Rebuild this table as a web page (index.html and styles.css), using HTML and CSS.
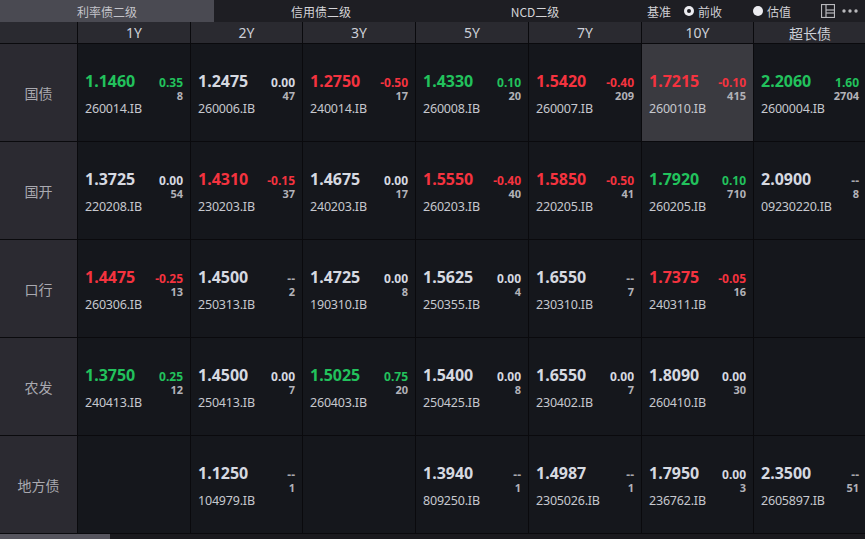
FILE: index.html
```html
<!DOCTYPE html>
<html lang="zh">
<head>
<meta charset="utf-8">
<title>利率债二级</title>
<link rel="stylesheet" href="styles.css">
</head>
<body>
<div class="app">
  <div class="topbar">
    <div class="tab active">利率债二级</div>
    <div class="tab">信用债二级</div>
    <div class="tab">NCD二级</div>
    <div class="controls">
      <span class="lbl">基准</span>
      <span class="radio checked"></span><span class="opt">前收</span>
      <span class="radio"></span><span class="opt">估值</span>
      <svg class="icon-layout" width="14" height="14" viewBox="0 0 14 14"><rect x="0.5" y="0.5" width="13" height="13" fill="none" stroke="#b8b8bc" stroke-width="1.2"/><line x1="5" y1="0.5" x2="5" y2="13.5" stroke="#b8b8bc" stroke-width="1.2"/><line x1="5" y1="6" x2="13.5" y2="6" stroke="#b8b8bc" stroke-width="1.2"/><line x1="5" y1="9" x2="13.5" y2="9" stroke="#b8b8bc" stroke-width="1.2"/></svg>
      <svg class="icon-more" width="16" height="4" viewBox="0 0 16 4"><circle cx="2" cy="2" r="1.7" fill="#b8b8bc"/><circle cx="8" cy="2" r="1.7" fill="#b8b8bc"/><circle cx="14" cy="2" r="1.7" fill="#b8b8bc"/></svg>
    </div>
  </div>

  <div class="table">
    <div class="hd corner"></div>
    <div class="hd">1Y</div>
    <div class="hd">2Y</div>
    <div class="hd">3Y</div>
    <div class="hd">5Y</div>
    <div class="hd">7Y</div>
    <div class="hd">10Y</div>
    <div class="hd">超长债</div>

    <!-- 国债 -->
    <div class="rl">国债</div>
    <div class="cell"><div class="l1"><span class="px g">1.1460</span><span class="ch g">0.35</span></div><div class="vol">8</div><div class="code">260014.IB</div></div>
    <div class="cell"><div class="l1"><span class="px w">1.2475</span><span class="ch w">0.00</span></div><div class="vol">47</div><div class="code">260006.IB</div></div>
    <div class="cell"><div class="l1"><span class="px r">1.2750</span><span class="ch r">-0.50</span></div><div class="vol">17</div><div class="code">240014.IB</div></div>
    <div class="cell"><div class="l1"><span class="px g">1.4330</span><span class="ch g">0.10</span></div><div class="vol">20</div><div class="code">260008.IB</div></div>
    <div class="cell"><div class="l1"><span class="px r">1.5420</span><span class="ch r">-0.40</span></div><div class="vol">209</div><div class="code">260007.IB</div></div>
    <div class="cell sel"><div class="l1"><span class="px r">1.7215</span><span class="ch r">-0.10</span></div><div class="vol">415</div><div class="code">260010.IB</div></div>
    <div class="cell"><div class="l1"><span class="px g">2.2060</span><span class="ch g">1.60</span></div><div class="vol">2704</div><div class="code">2600004.IB</div></div>

    <!-- 国开 -->
    <div class="rl">国开</div>
    <div class="cell"><div class="l1"><span class="px w">1.3725</span><span class="ch w">0.00</span></div><div class="vol">54</div><div class="code">220208.IB</div></div>
    <div class="cell"><div class="l1"><span class="px r">1.4310</span><span class="ch r">-0.15</span></div><div class="vol">37</div><div class="code">230203.IB</div></div>
    <div class="cell"><div class="l1"><span class="px w">1.4675</span><span class="ch w">0.00</span></div><div class="vol">17</div><div class="code">240203.IB</div></div>
    <div class="cell"><div class="l1"><span class="px r">1.5550</span><span class="ch r">-0.40</span></div><div class="vol">40</div><div class="code">260203.IB</div></div>
    <div class="cell"><div class="l1"><span class="px r">1.5850</span><span class="ch r">-0.50</span></div><div class="vol">41</div><div class="code">220205.IB</div></div>
    <div class="cell"><div class="l1"><span class="px g">1.7920</span><span class="ch g">0.10</span></div><div class="vol">710</div><div class="code">260205.IB</div></div>
    <div class="cell"><div class="l1"><span class="px w">2.0900</span><span class="ch d">--</span></div><div class="vol">8</div><div class="code">09230220.IB</div></div>

    <!-- 口行 -->
    <div class="rl">口行</div>
    <div class="cell"><div class="l1"><span class="px r">1.4475</span><span class="ch r">-0.25</span></div><div class="vol">13</div><div class="code">260306.IB</div></div>
    <div class="cell"><div class="l1"><span class="px w">1.4500</span><span class="ch d">--</span></div><div class="vol">2</div><div class="code">250313.IB</div></div>
    <div class="cell"><div class="l1"><span class="px w">1.4725</span><span class="ch w">0.00</span></div><div class="vol">8</div><div class="code">190310.IB</div></div>
    <div class="cell"><div class="l1"><span class="px w">1.5625</span><span class="ch w">0.00</span></div><div class="vol">4</div><div class="code">250355.IB</div></div>
    <div class="cell"><div class="l1"><span class="px w">1.6550</span><span class="ch d">--</span></div><div class="vol">7</div><div class="code">230310.IB</div></div>
    <div class="cell"><div class="l1"><span class="px r">1.7375</span><span class="ch r">-0.05</span></div><div class="vol">16</div><div class="code">240311.IB</div></div>
    <div class="cell"></div>

    <!-- 农发 -->
    <div class="rl">农发</div>
    <div class="cell"><div class="l1"><span class="px g">1.3750</span><span class="ch g">0.25</span></div><div class="vol">12</div><div class="code">240413.IB</div></div>
    <div class="cell"><div class="l1"><span class="px w">1.4500</span><span class="ch w">0.00</span></div><div class="vol">7</div><div class="code">250413.IB</div></div>
    <div class="cell"><div class="l1"><span class="px g">1.5025</span><span class="ch g">0.75</span></div><div class="vol">20</div><div class="code">260403.IB</div></div>
    <div class="cell"><div class="l1"><span class="px w">1.5400</span><span class="ch w">0.00</span></div><div class="vol">8</div><div class="code">250425.IB</div></div>
    <div class="cell"><div class="l1"><span class="px w">1.6550</span><span class="ch w">0.00</span></div><div class="vol">7</div><div class="code">230402.IB</div></div>
    <div class="cell"><div class="l1"><span class="px w">1.8090</span><span class="ch w">0.00</span></div><div class="vol">30</div><div class="code">260410.IB</div></div>
    <div class="cell"></div>

    <!-- 地方债 -->
    <div class="rl">地方债</div>
    <div class="cell"></div>
    <div class="cell"><div class="l1"><span class="px w">1.1250</span><span class="ch d">--</span></div><div class="vol">1</div><div class="code">104979.IB</div></div>
    <div class="cell"></div>
    <div class="cell"><div class="l1"><span class="px w">1.3940</span><span class="ch d">--</span></div><div class="vol">1</div><div class="code">809250.IB</div></div>
    <div class="cell"><div class="l1"><span class="px w">1.4987</span><span class="ch d">--</span></div><div class="vol">1</div><div class="code">2305026.IB</div></div>
    <div class="cell"><div class="l1"><span class="px w">1.7950</span><span class="ch w">0.00</span></div><div class="vol">3</div><div class="code">236762.IB</div></div>
    <div class="cell"><div class="l1"><span class="px w">2.3500</span><span class="ch d">--</span></div><div class="vol">51</div><div class="code">2605897.IB</div></div>
  </div>

  <div class="scrollbar"><div class="thumb"></div></div>
</div>
</body>
</html>
```

FILE: styles.css
```css
* { box-sizing: border-box; }
html, body {
  margin: 0;
  padding: 0;
  background: #0c0c0f;
}
body {
  font-family: "Noto Sans", "Noto Sans CJK SC", sans-serif;
  color: #d0d0d6;
  width: 865px;
  height: 539px;
  overflow: hidden;
}
.app {
  display: flex;
  flex-direction: column;
  width: 865px;
  height: 539px;
}
.topbar {
  display: flex;
  align-items: stretch;
  height: 22px;
  background: #1e1e23;
  font-family: "Noto Sans CJK SC", sans-serif;
  font-size: 12px;
}
.tab {
  width: 214px;
  display: flex;
  align-items: center;
  justify-content: center;
  color: #d4d4d8;
}
.tab.active {
  background: #4a4a52;
  color: #c4c4ca;
}
.controls {
  flex: 1;
  display: flex;
  align-items: center;
  padding-left: 5px;
  color: #cfcfd4;
}
.lbl { margin-right: 13px; }
.radio {
  width: 10px;
  height: 10px;
  border-radius: 50%;
  background: #ececf0;
  margin-right: 4px;
  position: relative;
}
.radio.checked::after {
  content: "";
  position: absolute;
  left: 3px;
  top: 3px;
  width: 4px;
  height: 4px;
  border-radius: 50%;
  background: #1e1e23;
}
.opt { margin-right: 31px; }
.opt:last-of-type { margin-right: 30px; }
.icon-layout { margin-right: 7px; }

.table {
  display: grid;
  grid-template-columns: 77px 112px 111px 112px 112px 112px 111px 112px;
  grid-template-rows: 21px repeat(5, 97px);
  gap: 1px;
  background: #0a0a0d;
  padding-bottom: 1px;
}
.hd {
  background: #2a2a30;
  display: flex;
  align-items: center;
  justify-content: center;
  font-family: "Noto Sans", "Noto Sans CJK SC", sans-serif;
  font-size: 14px;
  color: #cdd0d8;
}
.rl {
  background: #2b2a31;
  display: flex;
  align-items: center;
  justify-content: center;
  font-family: "Noto Sans CJK SC", sans-serif;
  font-size: 14px;
  color: #a9a9b0;
}
.cell {
  background: #15171c;
  display: flex;
  flex-direction: column;
  justify-content: center;
  padding: 1px 7px 0 7px;
}
.cell.sel { background: #3a3a40; }
.l1 {
  display: flex;
  justify-content: space-between;
  align-items: baseline;
  height: 18px;
  line-height: 18px;
}
.px {
  font-size: 16px;
  font-weight: 700;
}
.ch {
  font-size: 12px;
  font-weight: 700;
  line-height: 13px;
}
.vol {
  text-align: right;
  font-size: 11px;
  font-weight: 700;
  line-height: 12px;
  height: 12px;
  color: #b2b2b8;
}
.code {
  font-size: 12.5px;
  line-height: 13px;
  height: 13px;
  color: #c6c8ce;
  letter-spacing: -0.2px;
}
.g { color: #22c25c; }
.r { color: #f4333f; }
.w { color: #d6d9e0; }
.d { color: #a8a8ae; }

.scrollbar {
  flex: 1;
  background: #1a1a1e;
}
.thumb {
  width: 110px;
  height: 100%;
  background: #56555e;
}
```
